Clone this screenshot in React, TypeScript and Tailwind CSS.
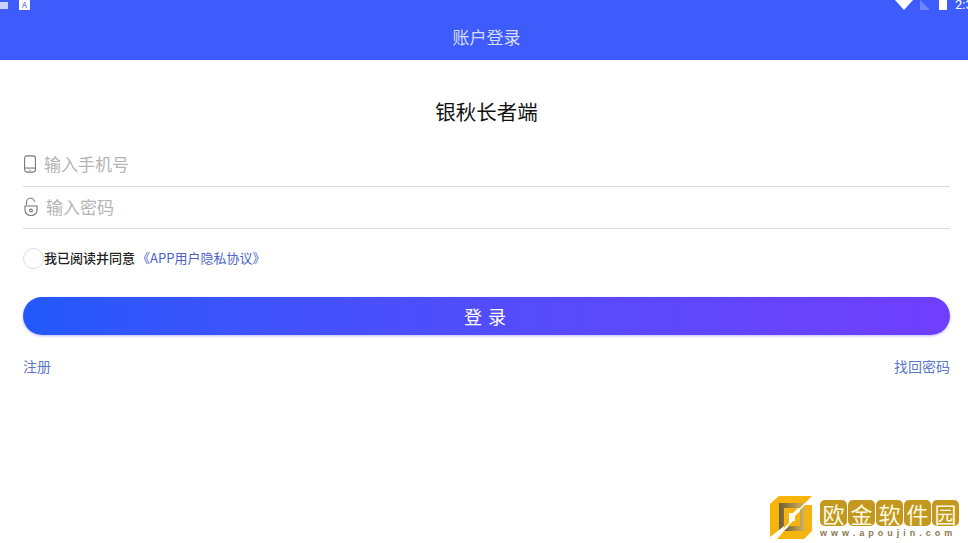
const cjk = { fontFamily: '"Noto Sans CJK SC", "Liberation Sans", sans-serif' };

function PhoneIcon() {
  return (
    <svg width="14" height="18" viewBox="0 0 14 20" fill="none" stroke="#777" strokeWidth="1.2">
      <rect x="1" y="1" width="12" height="18" rx="2.5" />
      <path d="M1 14.5h12" />
      <circle cx="7" cy="16.8" r="0.8" fill="#777" stroke="none" />
    </svg>
  );
}

function LockIcon() {
  return (
    <svg width="16" height="20" viewBox="0 0 16 20" fill="none" stroke="#777" strokeWidth="1.1">
      <path d="M3.5 8V5.5a4 4 0 0 1 8-.6" />
      <path d="M2 9h12v4.5a6 5 0 0 1-12 0z" />
      <circle cx="8" cy="13.5" r="1.4" />
    </svg>
  );
}

function Logo() {
  return (
    <svg width="42" height="44" viewBox="0 0 42 44">
      <defs>
        <linearGradient id="arm" x1="0" y1="0" x2="1" y2="0">
          <stop offset="0" stopColor="#6f5f35" />
          <stop offset="1" stopColor="#d8b65a" />
        </linearGradient>
      </defs>
      <path d="M0 9 9 1h33l-7 7H9v27l-9 7z" fill="#f7b40d" />
      <path d="M9 8h26l-5 5H14v18l-5 4z" fill="url(#arm)" />
      <path d="M42 10v26l-8 8H7l7-8h21V10z" fill="#f7b40d" />
      <path d="M35 10v26H14l5-5h11V15z" fill="url(#arm)" />
      <path d="M14 13h14l-5 5h-4v10l-5 5z" fill="#f7b40d" />
      <path d="M30 16v15H18l5-5h2v-5z" fill="#f7b40d" />
      <path d="M19 18h4l2 3v5h-2l-4 2z" fill="#fff" />
    </svg>
  );
}

function Stamp({ children }: { children: string }) {
  return (
    <span className="w-[27px] h-[26px] flex items-center justify-center rounded-[5px] bg-[#c2981f] text-[22px] leading-none text-[#fff8e2]">
      {children}
    </span>
  );
}

export default function App() {
  return (
    <div className="w-[968px] h-[543px] bg-white flex flex-col overflow-hidden" style={cjk}>
      <header className="h-[60px] shrink-0 bg-[#3d5cfb] flex flex-col">
        <div className="h-[10px] flex items-center justify-between overflow-hidden">
          <div className="flex items-center gap-[11px]">
            <span className="w-[8px] h-[7px] bg-[#c8d2ff]" />
            <span className="w-[11px] h-[10px] bg-white text-[8px] leading-[10px] text-center text-[#3d5cfb]">A</span>
          </div>
          <div className="flex items-center">
            <svg width="18" height="10" viewBox="0 0 18 10" className="mr-[7px]"><path d="M0 0h18l-9 10z" fill="#fff" /></svg>
            <svg width="10" height="10" viewBox="0 0 10 10" className="mr-[9px]"><path d="M0 0l10 10H0z" fill="#6f86fb" /></svg>
            <span className="w-[8px] h-[10px] bg-white mr-[8px]" />
            <span className="text-[13px] leading-[10px] text-white w-[13px] overflow-hidden whitespace-nowrap" style={{ fontFamily: '"Roboto", sans-serif' }}>2:3</span>
          </div>
        </div>
        <div className="flex-1 flex items-center justify-center pl-[5px] pt-[4px] text-[17px] text-[#d6dcff]">账户登录</div>
      </header>

      <main className="flex-1 pl-[23px] pr-[18px] relative">
        <h1 className="mt-[36px] h-[30px] text-center text-[20.5px] leading-[30px] text-[#111]">银秋长者端</h1>

        <div className="mt-[18px] h-[43px] flex items-center border-b border-[#dcdcdc] gap-[7px] pb-[2px]">
          <PhoneIcon />
          <span className="text-[17px] text-[#b4b4b4]">输入手机号</span>
        </div>
        <div className="h-[42px] flex items-center border-b border-[#dcdcdc] gap-[7px] pb-[2px]">
          <LockIcon />
          <span className="text-[17px] text-[#b4b4b4]">输入密码</span>
        </div>

        <div className="mt-[18px] h-[22px] flex items-center text-[13px]">
          <span className="w-[21px] h-[21px] rounded-full border border-[#dddddd] bg-white" />
          <span className="text-[#222] font-medium">我已阅读并同意</span>
          <span className="text-[#4a62c8] ml-[2px]">《APP用户隐私协议》</span>
        </div>

        <button className="mt-[28px] w-full h-[38px] pl-[3px] rounded-[19px] bg-gradient-to-r from-[#2158fb] to-[#6f3efc] text-white text-lg tracking-[6px] shadow-[0_1px_3px_rgba(90,80,240,0.4)]">
          登录
        </button>

        <div className="mt-[21px] flex justify-between text-sm text-[#5a78c8]">
          <span>注册</span>
          <span>找回密码</span>
        </div>

        <div className="absolute right-[9px] bottom-[4px] flex items-start gap-[8px]">
          <Logo />
          <div className="flex flex-col items-start w-[139px] pt-[5px]">
            <div className="flex gap-[1px]">
              <Stamp>欧</Stamp>
              <Stamp>金</Stamp>
              <Stamp>软</Stamp>
              <Stamp>件</Stamp>
              <Stamp>园</Stamp>
            </div>
            <span className="mt-[2px] text-[9px] leading-[10px] tracking-[4px] font-bold whitespace-nowrap text-[#8a7a55]" style={{ fontFamily: '"Liberation Sans", sans-serif' }}>www.apoujin.com</span>
          </div>
        </div>
      </main>
    </div>
  );
}
